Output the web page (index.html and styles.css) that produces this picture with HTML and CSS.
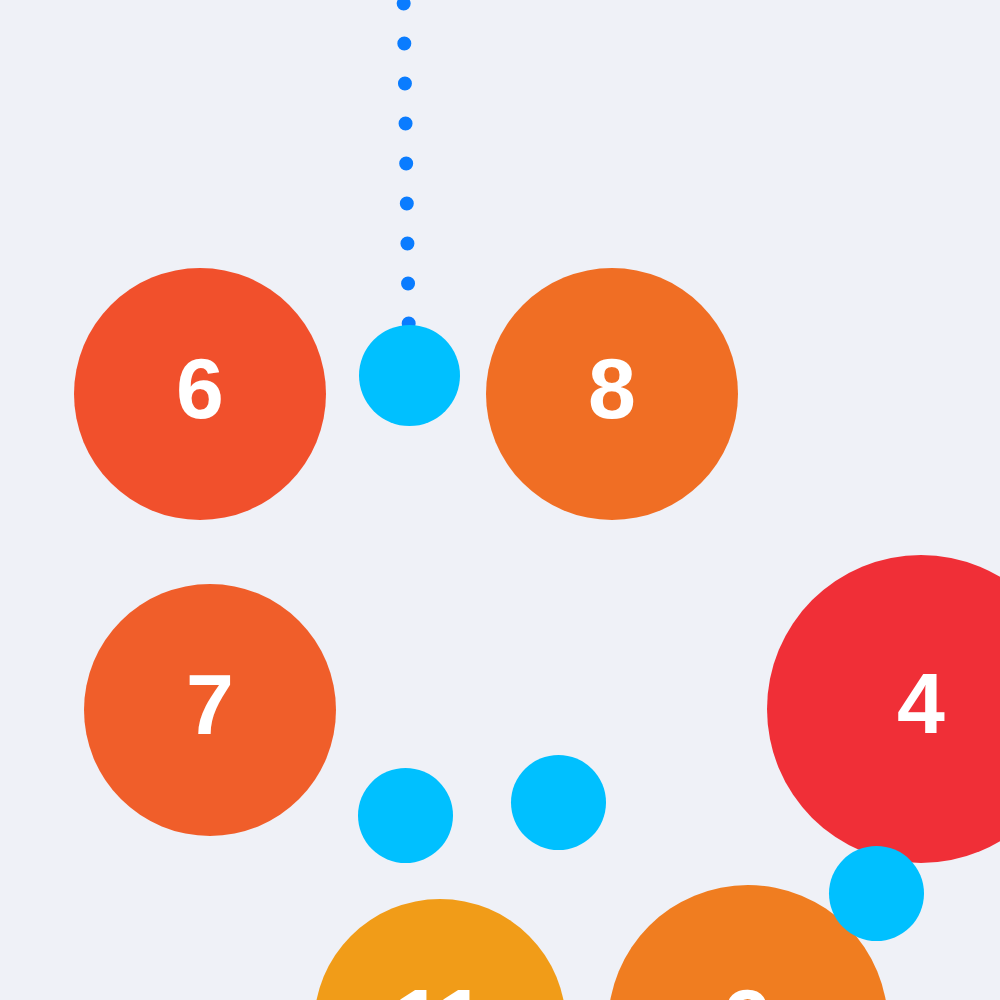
FILE: index.html
```html
<!DOCTYPE html>
<html>
<head>
<meta charset="utf-8">
<link rel="stylesheet" href="styles.css">
</head>
<body>
<div class="canvas">
  <svg class="links" width="1000" height="1000" viewBox="0 0 1000 1000">
    <path class="dotted" d="M409.5 375.5 L398 -360"/>
  </svg>
  <div class="node big n6">6</div>
  <div class="node big n8">8</div>
  <div class="node big n7">7</div>
  <div class="node big n4">4</div>
  <div class="node big n11">11</div>
  <div class="node big n9">9</div>
  <div class="node dot da"></div>
  <div class="node dot db"></div>
  <div class="node dot dc"></div>
  <div class="node dot dd"></div>
</div>
</body>
</html>
```
FILE: styles.css
```css
html, body {
  margin: 0;
  padding: 0;
  background: #eff1f7;
}
.canvas {
  position: relative;
  width: 1000px;
  height: 1000px;
  overflow: hidden;
  background: #eff1f7;
  font-family: "Liberation Sans", Arial, sans-serif;
}
.links {
  position: absolute;
  left: 0;
  top: 0;
}
.dotted {
  fill: none;
  stroke: #0a7cff;
  stroke-width: 14;
  stroke-linecap: round;
  stroke-dasharray: 0 40;
  stroke-dashoffset: 28;
}
.node {
  position: absolute;
  border-radius: 50%;
  display: flex;
  align-items: center;
  justify-content: center;
  box-sizing: border-box;
  color: #ffffff;
  font-weight: 700;
  font-size: 86px;
  padding-bottom: 12px;
}
.big { width: 252px; height: 252px; }
.dot { width: 95px; height: 95px; background: #00c0ff; }
.n6 { left: 74px; top: 268px; background: #f1502c; }
.n8 { left: 486px; top: 268px; background: #f06e24; }
.n7 { left: 84px; top: 584px; background: #f05e2a; }
.n4 { left: 767px; top: 555px; width: 308px; height: 308px; background: #f02f37; }
.n11 { left: 314px; top: 899px; background: #f19c18; }
.n9 { left: 608px; top: 885px; width: 280px; height: 280px; background: #f07d20; }
.da { left: 359px; top: 325px; width: 101px; height: 101px; }
.db { left: 358px; top: 768px; }
.dc { left: 511px; top: 755px; }
.dd { left: 829px; top: 846px; }
```
